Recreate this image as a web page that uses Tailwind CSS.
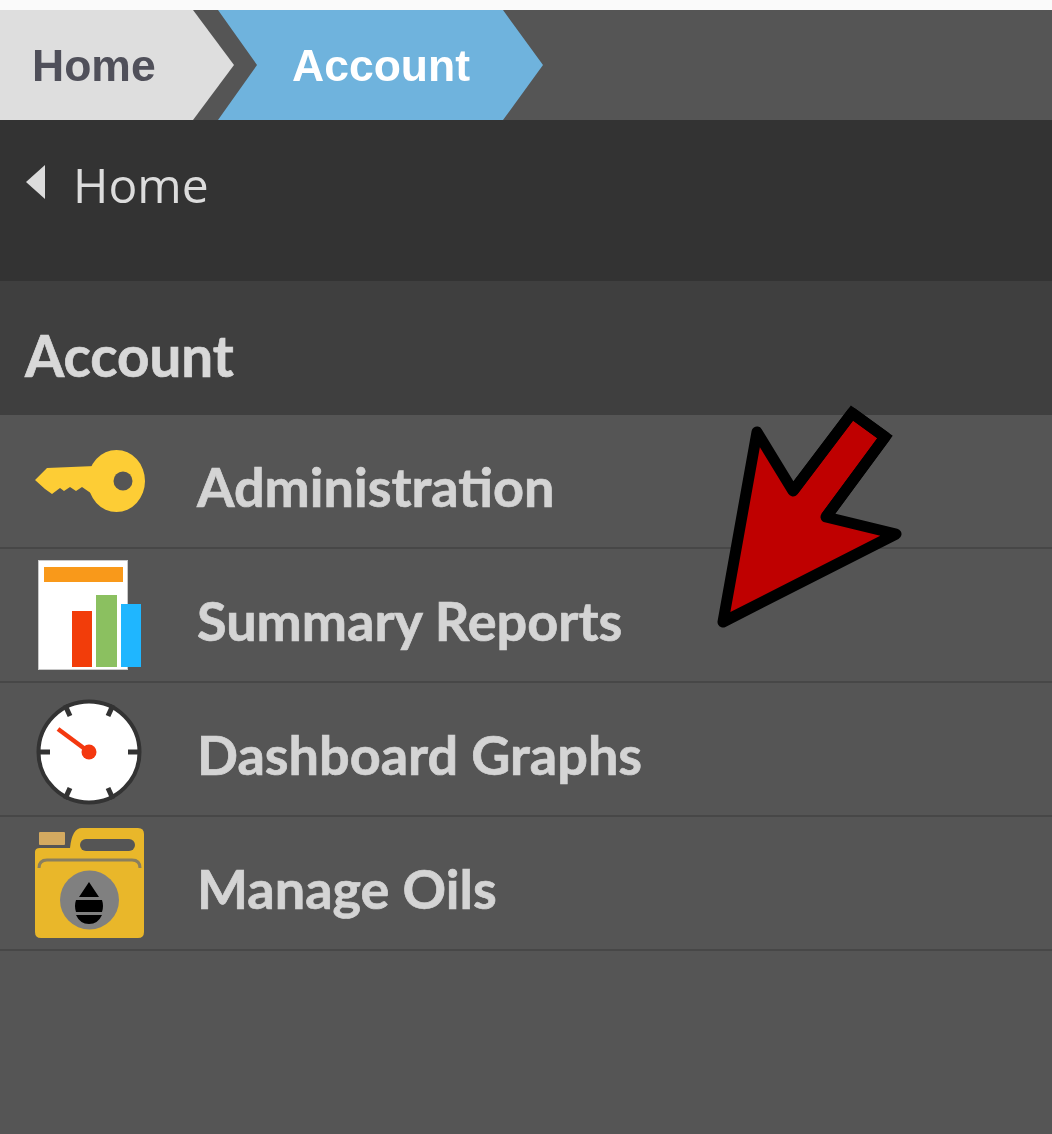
<!DOCTYPE html>
<html lang="en">
<head>
  <meta charset="UTF-8">
  <title>Account</title>
  <script src="https://cdn.jsdelivr.net/npm/@tailwindcss/browser@4"></script>
</head>
<body class="bg-[#555555] h-[1134px] w-[1052px] overflow-hidden relative">

  <div class="h-[10px] bg-[#fafafa]"></div>

  <!-- breadcrumb -->
  <div class="h-[110px] bg-[#555555] flex font-['Liberation_Sans',sans-serif] font-bold text-[44.5px]">
    <a class="w-[234px] h-full bg-[#dedede] text-[#50505a] pl-[32px] pt-[3px] flex items-center [clip-path:polygon(0_0,193px_0,100%_50%,193px_100%,0_100%)]"><span class="blur-[0.5px]">Home</span></a>
    <a class="w-[325px] h-full -ml-[16px] bg-[#6fb3dd] text-white pl-[74px] pt-[3px] flex items-center [clip-path:polygon(0_0,285px_0,100%_50%,285px_100%,0_100%,39px_50%)]"><span class="blur-[0.5px]">Account</span></a>
  </div>

  <!-- back link -->
  <div class="h-[161px] bg-[#333333] pl-[26px] pt-[34px] flex items-start gap-[27px] text-[#dcdcdc] font-['Open_Sans',sans-serif] text-[48px] leading-[62px]">
    <svg class="w-[20px] h-[34px] mt-[11px] blur-[0.5px]" viewBox="0 0 20 34"><path d="M19 0 L0 17 L19 34 Z" fill="#dcdcdc"/></svg>
    <span class="blur-[0.5px]">Home</span>
  </div>

  <!-- section title -->
  <div class="h-[134px] bg-[#3f3f3f] pl-[25px] pt-[15px] flex items-center font-['Lato',sans-serif] font-bold text-[56.5px] text-[#d8d8d8] [-webkit-text-stroke:0.7px_#d8d8d8]"><span class="blur-[0.5px]">Account</span></div>

  <!-- menu -->
  <ul class="font-['Lato',sans-serif] font-bold text-[54px] text-[#d4d4d4] [-webkit-text-stroke:0.7px_#d4d4d4]">
    <li class="h-[134px] border-b-2 border-[#474747] pl-[34px] flex items-center gap-[51px]">
      <svg class="w-[112px] h-[112px] blur-[0.7px]" viewBox="34 425 112 112">
        <ellipse cx="116.5" cy="481" rx="28.5" ry="31" fill="#fdcd35"/>
        <path fill="#fdcd35" d="M35 480 L47 468 L95 466 L95 496 L82 487 L76 491 L70 487 L64 491 L60 488 L52 494 L45 489 Z"/>
        <circle cx="123" cy="481" r="9.5" fill="#555555"/>
      </svg>
      <span class="pt-[10px] blur-[0.5px]">Administration</span>
    </li>
    <li class="h-[134px] border-b-2 border-[#474747] pl-[34px] flex items-center gap-[51px]">
      <svg class="w-[112px] h-[112px] blur-[0.7px]" viewBox="34 559 112 112">
        <rect x="38.5" y="560.5" width="89" height="109" fill="#ffffff" stroke="#c8c8c8"/>
        <rect x="44" y="567" width="79" height="15" fill="#f9991a"/>
        <rect x="72" y="611" width="20" height="56" fill="#f23d0a"/>
        <rect x="96" y="595" width="21" height="72" fill="#8bc060"/>
        <rect x="121" y="604" width="20" height="63" fill="#1fb6ff"/>
      </svg>
      <span class="pt-[10px] blur-[0.5px]">Summary Reports</span>
    </li>
    <li class="h-[134px] border-b-2 border-[#474747] pl-[34px] flex items-center gap-[51px]">
      <svg class="w-[112px] h-[112px] blur-[0.7px]" viewBox="34 693 112 112">
        <circle cx="89" cy="752" r="50.5" fill="#ffffff" stroke="#333333" stroke-width="4"/>
        <path stroke="#333333" stroke-width="5" d="M40 752 H50 M128 752 H138 M70 716 L65 705 M113 705 L108 716 M70 788 L65 799 M108 788 L113 799"/>
        <path d="M58 729 L89 752" stroke="#f4380f" stroke-width="4.5"/>
        <circle cx="89" cy="752" r="7.5" fill="#f4380f"/>
      </svg>
      <span class="pt-[10px] blur-[0.5px]">Dashboard Graphs</span>
    </li>
    <li class="h-[134px] border-b-2 border-[#474747] pl-[34px] flex items-center gap-[51px]">
      <svg class="w-[112px] h-[112px] blur-[0.7px]" viewBox="34 827 112 112">
        <path fill="#e9b72a" d="M35 852 Q35 848 40 848 L70 848 Q72 828 82 828 L138 828 Q144 828 144 834 L144 932 Q144 938 138 938 L41 938 Q35 938 35 932 Z"/>
        <rect x="39" y="832" width="26" height="13" rx="1" fill="#d4aa60"/>
        <rect x="80" y="839" width="55" height="12" rx="6" fill="#555555"/>
        <path d="M39 868 Q39 860 47 860 L132 860 Q140 860 140 868" fill="none" stroke="#8a7f5e" stroke-width="3"/>
        <circle cx="89.5" cy="900" r="29.5" fill="#808080"/>
        <path fill="#000000" d="M89 882 L99 897 L79 897 Z M76 900 H102 Q104 906 102 912 H76 Q74 906 76 900 Z M76 915 H102 Q98 924 89 924 Q80 924 76 915 Z"/>
      </svg>
      <span class="pt-[10px] blur-[0.5px]">Manage Oils</span>
    </li>
  </ul>

  <!-- red arrow annotation -->
  <svg class="absolute left-[700px] top-[395px] w-[220px] h-[245px]" viewBox="700 395 220 245">
    <path d="M723 622 L757 432 L793 491 L852 413 L885 437 L826 517 L896 534 Z" fill="#bf0000" stroke="#000000" stroke-width="11" stroke-linejoin="round"/>
    <path d="M793 491 L852 413 L885 437 L826 517" fill="none" stroke="#000000" stroke-width="11" stroke-linejoin="miter"/>
  </svg>

</body>
</html>
